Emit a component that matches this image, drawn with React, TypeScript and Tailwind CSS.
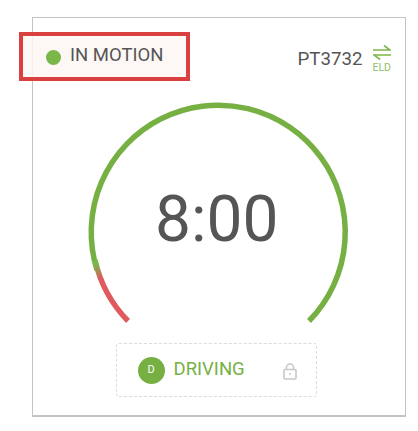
function Gauge() {
  return (
    <svg width="268" height="232" viewBox="0 0 268 232" className="block">
      <defs>
        <linearGradient id="fade" gradientUnits="userSpaceOnUse" x1="12" y1="164" x2="16" y2="179">
          <stop offset="0" stopColor="#7ab648" />
          <stop offset="1" stopColor="#e0595f" />
        </linearGradient>
      </defs>
      {/* green part runs over the top, red tail is bottom left */}
      <path d="M 12 170 A 127 127 0 1 1 224 221" fill="none" stroke="#76b043" strokeWidth="5.5" />
      <path d="M 43 221 A 127 127 0 0 1 10 160" fill="none" stroke="url(#fade)" strokeWidth="5.5" />
    </svg>
  )
}

function LockIcon() {
  return (
    <svg width="14" height="17" viewBox="0 0 14 17" fill="none" stroke="#c8c8c8" strokeWidth="1.6" className="ml-auto mt-[2px]">
      <rect x="1" y="6.5" width="12" height="9.5" rx="1" />
      <path d="M3.5 6.5 V4.5 a3.5 3.5 0 0 1 7 0 V6.5" />
      <circle cx="7" cy="11" r="1" fill="#c8c8c8" stroke="none" />
    </svg>
  )
}

export default function App() {
  return (
    <div className="relative h-[431px] w-[418px] bg-white font-['Roboto',sans-serif]">
      <div className="absolute left-[32px] top-[17px] flex h-[400px] w-[374px] flex-col items-center border border-b-2 border-[#c4c4c4] bg-white">
        <div className="flex h-[70px] w-full items-center justify-end pr-[14px] pt-[12px]">
          <span className="text-[18.7px] text-[#555555]">PT3732</span>
          <div className="ml-[10px] flex flex-col items-center text-[#7ab648]">
            <svg width="18" height="15" viewBox="0 0 18 15" fill="none" stroke="currentColor" strokeWidth="1.6">
              <path d="M0 5 H17 L11 0.5" />
              <path d="M18 10 H1 L7 14.5" />
            </svg>
            <span className="mt-[2px] text-[10.5px] leading-[11px] text-[#8fc168]">ELD</span>
          </div>
        </div>
        <div className="relative mt-[12px] flex h-[232px] w-[268px] items-center justify-center">
          <Gauge />
          <span className="absolute left-[70px] top-[72px] text-[64px] leading-[96px] text-[#555555]">8:00</span>
        </div>
        <div className="mr-[6px] mt-[11px] flex h-[54px] w-[201px] items-center rounded-[3px] border border-dashed border-[#dcdcdc] pl-[21px] pr-[19px]">
          <div className="flex h-[27px] w-[27px] items-center justify-center rounded-full bg-[#76b043] text-[11px] text-white">D</div>
          <span className="ml-[9px] text-[18.5px] text-[#76b043]">DRIVING</span>
          <LockIcon />
        </div>
      </div>
      {/* annotation box drawn over the card */}
      <div className="absolute left-[19px] top-[32px] flex h-[49px] w-[171px] items-center border-[4px] border-[#d9403f] bg-[#fdf7f4]/85 pl-[23px]">
        <span className="mt-[2px] h-[15px] w-[15px] rounded-full bg-[#7ab648]" />
        <span className="-mt-[2px] ml-[9px] text-[18.5px] text-[#555555]">IN MOTION</span>
      </div>
    </div>
  )
}
